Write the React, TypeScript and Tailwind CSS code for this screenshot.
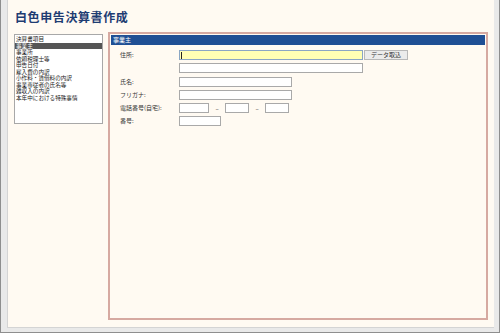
import React from 'react';

const items = [
  '決算書項目',
  '事業主',
  '事業所',
  '依頼税理士等',
  '申告日付',
  '雇入費の内訳',
  '小作料・賃借料の内訳',
  '事業専従者の氏名等',
  '雑収入の内訳',
  '本年中における特殊事情',
];

const jp = { fontFamily: '"Noto Sans CJK JP", "Noto Sans", sans-serif' };

function Box({ w, yellow, caret }: { w: string; yellow?: boolean; caret?: boolean }) {
  return (
    <div
      className={`${w} h-[10px] border ${
        yellow ? 'bg-[#ffffb4] border-[#8aa6c4]' : 'bg-white border-[#a9a9a9]'
      } flex items-center pl-[1px]`}
    >
      {caret && <div className="w-px h-[7px] bg-[#222]" />}
    </div>
  );
}

function Label({ text }: { text: string }) {
  return <div className="w-[68px] pl-[9px] text-[6px] leading-[10px] text-[#333]">{text}</div>;
}

export default function App() {
  return (
    <div
      className="w-[500px] h-[333px] bg-[#e9e9e9] border-l border-r border-b border-[#8e8e8e] pl-[6px] pr-[5px] pb-[4px]"
      style={jp}
    >
      <div className="h-full bg-[#fffaf2] border-l border-b border-[#d4d4d4] flex flex-col pl-[6px] pr-[6px] pb-[7px]">
        {/* Title */}
        <div className="h-[32px] pl-[1px] pt-[9px] text-[12px] leading-[15px] font-bold text-[#1e3c72] tracking-[0.6px]">
          白色申告決算書作成
        </div>

        <div className="flex flex-1 gap-[5px] min-h-0">
          {/* List box */}
          <div className="w-[89px] h-[90px] mt-[2px] bg-white border border-[#a8a8a8] pt-[1px]">
            {items.map((it, i) => (
              <div
                key={it}
                className={`h-[6.5px] text-[5.6px] leading-[6.5px] pl-[1px] whitespace-nowrap overflow-hidden ${
                  i === 1 ? 'bg-[#555555] text-white' : 'text-[#222]'
                }`}
              >
                {it}
              </div>
            ))}
          </div>

          {/* Form panel */}
          <div className="flex-1 border-2 border-[#d6a9a1] p-[1px]">
            <div className="h-[10px] bg-[#1f4f94] text-white text-[6px] leading-[10px] pl-[2px]">事業主</div>

            <div className="mt-[5px] flex flex-col gap-[3.3px]">
              <div className="flex items-center">
                <Label text="住所:" />
                <Box w="w-[184px]" yellow caret />
                <div className="ml-[1px] w-[44px] h-[10px] bg-[#ebebeb] border border-[#b8b8b8] text-[6px] leading-[8px] text-center text-[#333]">
                  データ取込
                </div>
              </div>
              <div className="flex items-center">
                <Label text="" />
                <Box w="w-[184px]" />
              </div>
              <div className="flex items-center">
                <Label text="氏名:" />
                <Box w="w-[113px]" />
              </div>
              <div className="flex items-center">
                <Label text="フリガナ:" />
                <Box w="w-[113px]" />
              </div>
              <div className="flex items-center">
                <Label text="電話番号(自宅):" />
                <Box w="w-[30px]" />
                <div className="w-[16px] text-center text-[6px] text-[#333]">–</div>
                <Box w="w-[24px]" />
                <div className="w-[16px] text-center text-[6px] text-[#333]">–</div>
                <Box w="w-[24px]" />
              </div>
              <div className="flex items-center">
                <Label text="番号:" />
                <Box w="w-[42px]" />
              </div>
            </div>
          </div>
        </div>
      </div>
    </div>
  );
}
